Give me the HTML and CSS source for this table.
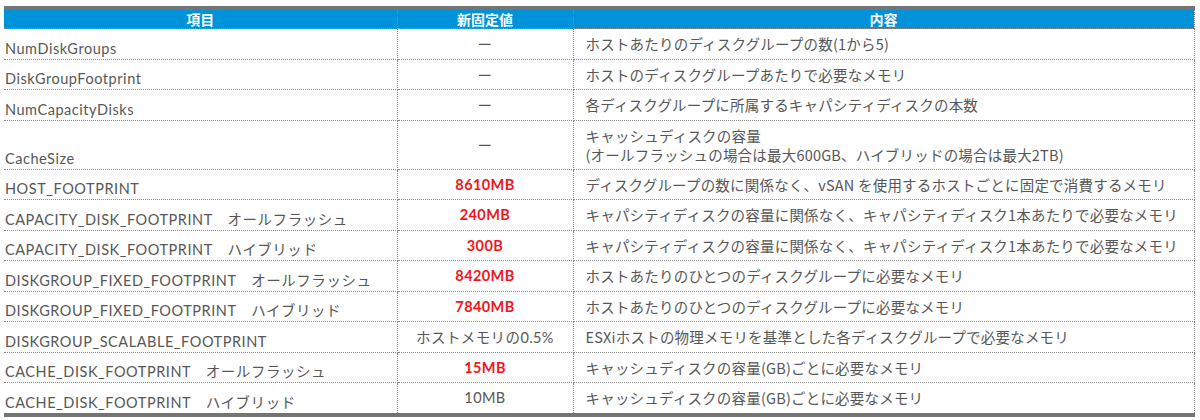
FILE: index.html
```html
<!DOCTYPE html>
<html lang="ja">
<head>
<meta charset="utf-8">
<title>vSAN メモリ計算の固定値</title>
<link rel="stylesheet" href="styles.css">
</head>
<body>
<table class="spec">
  <colgroup>
    <col class="col-item">
    <col class="col-val">
    <col class="col-desc">
  </colgroup>
  <thead>
    <tr><th>項目</th><th>新固定値</th><th>内容</th></tr>
  </thead>
  <tbody>
    <tr><td class="item">NumDiskGroups</td><td class="val">ー</td><td class="desc">ホストあたりのディスクグループの数(1から5)</td></tr>
    <tr><td class="item">DiskGroupFootprint</td><td class="val">ー</td><td class="desc">ホストのディスクグループあたりで必要なメモリ</td></tr>
    <tr><td class="item">NumCapacityDisks</td><td class="val">ー</td><td class="desc">各ディスクグループに所属するキャパシティディスクの本数</td></tr>
    <tr class="tall"><td class="item">CacheSize</td><td class="val">ー</td><td class="desc"><span class="line">キャッシュディスクの容量</span><span class="line">(オールフラッシュの場合は最大600GB、ハイブリッドの場合は最大2TB)</span></td></tr>
    <tr><td class="item">HOST_FOOTPRINT</td><td class="val red">8610MB</td><td class="desc">ディスクグループの数に関係なく、vSAN を使用するホストごとに固定で消費するメモリ</td></tr>
    <tr><td class="item">CAPACITY_DISK_FOOTPRINT　オールフラッシュ</td><td class="val red">240MB</td><td class="desc">キャパシティディスクの容量に関係なく、キャパシティディスク1本あたりで必要なメモリ</td></tr>
    <tr><td class="item">CAPACITY_DISK_FOOTPRINT　ハイブリッド</td><td class="val red">300B</td><td class="desc">キャパシティディスクの容量に関係なく、キャパシティディスク1本あたりで必要なメモリ</td></tr>
    <tr><td class="item">DISKGROUP_FIXED_FOOTPRINT　オールフラッシュ</td><td class="val red">8420MB</td><td class="desc">ホストあたりのひとつのディスクグループに必要なメモリ</td></tr>
    <tr><td class="item">DISKGROUP_FIXED_FOOTPRINT　ハイブリッド</td><td class="val red">7840MB</td><td class="desc">ホストあたりのひとつのディスクグループに必要なメモリ</td></tr>
    <tr><td class="item">DISKGROUP_SCALABLE_FOOTPRINT</td><td class="val">ホストメモリの0.5%</td><td class="desc">ESXiホストの物理メモリを基準とした各ディスクグループで必要なメモリ</td></tr>
    <tr><td class="item">CACHE_DISK_FOOTPRINT　オールフラッシュ</td><td class="val red">15MB</td><td class="desc">キャッシュディスクの容量(GB)ごとに必要なメモリ</td></tr>
    <tr><td class="item">CACHE_DISK_FOOTPRINT　ハイブリッド</td><td class="val">10MB</td><td class="desc">キャッシュディスクの容量(GB)ごとに必要なメモリ</td></tr>
  </tbody>
</table>
</body>
</html>
```

FILE: styles.css
```css
html, body {
  background: #ffffff;
}
body {
  margin: 6px 0 0 4px;
  font-family: "Lato", "Noto Sans CJK JP", sans-serif;
  color: #575757;
}
.spec {
  border-collapse: collapse;
  table-layout: fixed;
  width: 1190px;
  border-top: 4px solid #747474;
  border-bottom: 4px solid #747474;
}
.col-item { width: 393px; }
.col-val { width: 176px; }
.col-desc { width: 621px; }

.spec th {
  background: #0093d9;
  color: #ffffff;
  font-family: "Noto Sans CJK JP", sans-serif;
  font-weight: 700;
  font-size: 14px;
  line-height: 18px;
  height: 18px;
  padding: 0;
  text-align: center;
  border-right: 1px dotted #8a8a8a;
  border-bottom: 1px dotted #8a8a8a;
}
.spec td {
  height: 28.5px;
  padding: 0;
  font-size: 14.5px;
  border-right: 1px dotted #8a8a8a;
  border-bottom: 1px dotted #8a8a8a;
}
.spec tr.tall td {
  height: 47px;
}
.spec td.item {
  vertical-align: bottom;
  padding: 0 0 1px 1px;
  letter-spacing: 0.55px;
  line-height: 18px;
  white-space: nowrap;
}
.spec td.val {
  text-align: center;
  vertical-align: middle;
  letter-spacing: 0.4px;
}
.spec td.red {
  color: #f2151b;
  font-weight: 700;
}
.spec td.desc {
  padding-left: 12px;
  vertical-align: middle;
  font-family: "Noto Sans CJK JP", sans-serif;
  font-size: 14.5px;
  letter-spacing: 0.2px;
  line-height: 17px;
  white-space: nowrap;
}
.spec td.desc .line {
  display: block;
  line-height: 19px;
}
```
